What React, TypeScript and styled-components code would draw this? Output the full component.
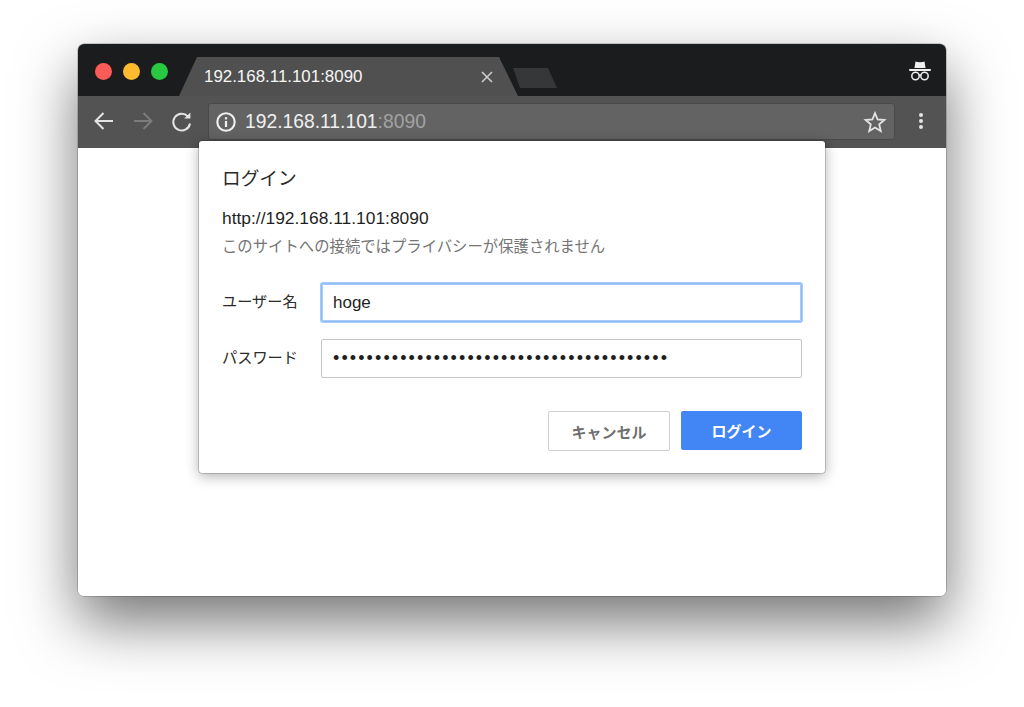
import React from "react";
import styled, { createGlobalStyle } from "styled-components";

const Global = createGlobalStyle`
  html, body { margin: 0; padding: 0; background: #fff; }
  body { font-family: "Liberation Sans", "Noto Sans CJK JP", sans-serif; overflow: hidden; }
`;

const Page = styled.div`
  width: 1024px;
  height: 707px;
  padding: 44px 78px 0;
  box-sizing: border-box;
  background: #fff;
`;

const Browser = styled.div`
  position: relative;
  width: 868px;
  height: 552px;
  border-radius: 6px;
  background: #fff;
  box-shadow: 0 26px 60px rgba(0, 0, 0, 0.55), 0 0 0 0.5px rgba(0, 0, 0, 0.35);
  display: flex;
  flex-direction: column;
`;

const TitleBar = styled.div`
  height: 52px;
  flex: none;
  display: flex;
  align-items: flex-start;
  padding: 0 14px 0 17px;
  background: #1b1c1e;
  border-radius: 6px 6px 0 0;
`;

const Lights = styled.div`
  display: flex;
  gap: 11px;
  margin-top: 19px;
`;

const Light = styled.span<{ $color: string }>`
  width: 17px;
  height: 17px;
  border-radius: 50%;
  background: ${(p) => p.$color};
`;

const Tab = styled.div`
  width: 339px;
  height: 39px;
  margin: 13px 0 0 11px;
  padding: 0 23px 0 25px;
  box-sizing: border-box;
  display: flex;
  align-items: center;
  justify-content: space-between;
  background: #505050;
  clip-path: polygon(18px 0, 320px 0, 339px 100%, 0 100%);
`;

const TabTitle = styled.span`
  color: #f6f6f6;
  font-size: 16.9px;
`;

const TabClose = styled.svg`
  width: 12px;
  height: 12px;
  margin-right: 2px;
  stroke: #d0d0d0;
  stroke-width: 1.5;
  fill: none;
`;

const NewTab = styled.div`
  width: 44px;
  height: 20px;
  margin: 24px 0 0 -5px;
  background: #363739;
  clip-path: polygon(0 0, 35px 0, 44px 100%, 7px 100%);
`;

const Incognito = styled.svg`
  width: 24px;
  height: 24px;
  margin: 15px 0 0 auto;
`;

const Toolbar = styled.div`
  height: 52px;
  flex: none;
  display: flex;
  align-items: center;
  padding: 0 12px 2px 14px;
  box-sizing: border-box;
  background: #535353;
`;

const NavIcon = styled.svg<{ $dim?: boolean }>`
  width: 24px;
  height: 24px;
  margin-right: 15px;
  flex: none;
  fill: none;
  stroke: ${(p) => (p.$dim ? "#7b7b7b" : "#e4e4e4")};
  stroke-width: 2;
`;

const Omnibox = styled.div`
  width: 687px;
  height: 37px;
  margin-left: -1px;
  margin-top: 1px;
  padding: 0 7px 0 6px;
  box-sizing: border-box;
  display: flex;
  align-items: center;
  border: 1px solid #494949;
  border-radius: 3px;
  background: #636363;
`;

const InfoIcon = styled.svg`
  width: 22px;
  height: 22px;
  flex: none;
  margin-right: 8px;
`;

const Url = styled.span`
  font-size: 19.3px;
  color: #f0f0f0;
`;

const Port = styled.span`
  color: #a2a2a2;
`;

const StarIcon = styled.svg`
  width: 24px;
  height: 24px;
  margin-left: auto;
  fill: none;
  stroke: #e4e4e4;
  stroke-width: 1.8;
`;

const MenuIcon = styled.svg`
  width: 6px;
  height: 18px;
  margin: 0 0 0 23px;
  fill: #e4e4e4;
`;

const Content = styled.div`
  flex: 1;
  background: #fff;
  border-radius: 0 0 6px 6px;
`;

const Dialog = styled.div`
  position: absolute;
  left: 121px;
  top: 97px;
  width: 626px;
  height: 332px;
  padding: 24px 23px 0;
  box-sizing: border-box;
  background: #fff;
  border-radius: 3px;
  box-shadow: 0 0 0 0.5px rgba(0, 0, 0, 0.35), 0 3px 14px rgba(0, 0, 0, 0.32);
  display: flex;
  flex-direction: column;
`;

const Title = styled.div`
  font-size: 18.7px;
  line-height: 28px;
  color: #2a2a2a;
`;

const Origin = styled.div`
  margin-top: 13px;
  font-size: 17.4px;
  line-height: 24px;
  color: #1f1f1f;
`;

const Notice = styled.div`
  margin-top: 5px;
  font-size: 15.36px;
  line-height: 24px;
  color: #757575;
`;

const Fields = styled.div`
  margin-top: 24px;
  display: grid;
  grid-template-columns: 99px 481px;
  row-gap: 17px;
  align-items: center;
`;

const Label = styled.label`
  font-size: 15.2px;
  color: #2a2a2a;
  margin-bottom: 5px;
`;

const TextInput = styled.input<{ $focused?: boolean }>`
  width: 481px;
  height: 39px;
  padding: 0 11px;
  box-sizing: border-box;
  outline: none;
  border-radius: 2px;
  border: 1px solid ${(p) => (p.$focused ? "#8fbbf7" : "#c6c6c6")};
  box-shadow: ${(p) => (p.$focused ? "0 0 0 1px #a7cbfa, inset 0 0 0 1px #a7cbfa" : "none")};
  font-family: "Liberation Sans", sans-serif;
  font-size: 17px;
  color: #1f1f1f;
  background: #fff;
`;

const PasswordInput = styled(TextInput)`
  font-size: 18px;
  letter-spacing: 2.1px;
`;

const Actions = styled.div`
  margin-top: 33px;
  display: flex;
  justify-content: flex-end;
  gap: 11px;
`;

const Button = styled.button<{ $primary?: boolean }>`
  width: ${(p) => (p.$primary ? "121px" : "122px")};
  height: ${(p) => (p.$primary ? "39px" : "40px")};
  padding: 0;
  border-radius: 2px;
  border: 1px solid ${(p) => (p.$primary ? "#4285f4" : "#cfcfcf")};
  background: ${(p) => (p.$primary ? "#4285f4" : "#fff")};
  color: ${(p) => (p.$primary ? "#fff" : "#6f6f6f")};
  font-family: "Liberation Sans", "Noto Sans CJK JP", sans-serif;
  font-size: 15px;
  font-weight: 700;
`;

export default function App() {
  return (
    <Page>
      <Global />
      <Browser>
        <TitleBar>
          <Lights>
            <Light $color="#fc5b57" />
            <Light $color="#febb2e" />
            <Light $color="#28c940" />
          </Lights>
          <Tab>
            <TabTitle>192.168.11.101:8090</TabTitle>
            <TabClose viewBox="0 0 12 12">
              <path d="M1 1 L11 11 M11 1 L1 11" />
            </TabClose>
          </Tab>
          <NewTab />
          <Incognito viewBox="0 0 24 24">
            <path d="M7.5 2.2 L8 2.8 C10 3.4 14 3.4 16 2.8 L16.5 2.2 L17.5 9 L6.5 9 Z" fill="#f0f0f0" />
            <rect x="1" y="10" width="22" height="2" rx="1" fill="#f0f0f0" />
            <circle cx="7.5" cy="17" r="3.7" fill="none" stroke="#f0f0f0" strokeWidth="1.5" />
            <circle cx="16.5" cy="17" r="3.7" fill="none" stroke="#f0f0f0" strokeWidth="1.5" />
            <path d="M11 16.4 C11.6 15.9 12.4 15.9 13 16.4" fill="none" stroke="#f0f0f0" strokeWidth="1.3" />
          </Incognito>
        </TitleBar>
        <Toolbar>
          <NavIcon viewBox="0 0 24 24">
            <path d="M21 12 H4 M11.5 4 L3.5 12 L11.5 20" />
          </NavIcon>
          <NavIcon viewBox="0 0 24 24" $dim>
            <path d="M3 12 H20 M12.5 4 L20.5 12 L12.5 20" />
          </NavIcon>
          <NavIcon viewBox="0 0 24 24">
            <path d="M17.9 7.4 A8.4 8.4 0 1 0 20 14.5" />
            <path d="M20.4 3.4 V9.6 H14.2 Z" fill="#e4e4e4" stroke="none" />
          </NavIcon>
          <Omnibox>
            <InfoIcon viewBox="0 0 22 22">
              <circle cx="11" cy="11" r="8.7" fill="none" stroke="#f0f0f0" strokeWidth="2.1" />
              <rect x="9.9" y="10" width="2.2" height="6" fill="#f0f0f0" />
              <rect x="9.9" y="6.2" width="2.2" height="2.2" fill="#f0f0f0" />
            </InfoIcon>
            <Url>
              192.168.11.101<Port>:8090</Port>
            </Url>
            <StarIcon viewBox="0 0 24 24">
              <path d="M12 3.2 L14.6 9.5 L21.4 10 L16.2 14.4 L17.8 21 L12 17.5 L6.2 21 L7.8 14.4 L2.6 10 L9.4 9.5 Z" />
            </StarIcon>
          </Omnibox>
          <MenuIcon viewBox="0 0 6 18">
            <circle cx="3" cy="3" r="2" />
            <circle cx="3" cy="9" r="2" />
            <circle cx="3" cy="15" r="2" />
          </MenuIcon>
        </Toolbar>
        <Content />
        <Dialog>
          <Title>ログイン</Title>
          <Origin>http://192.168.11.101:8090</Origin>
          <Notice>このサイトへの接続ではプライバシーが保護されません</Notice>
          <Fields>
            <Label>ユーザー名</Label>
            <TextInput $focused value="hoge" readOnly />
            <Label>パスワード</Label>
            <PasswordInput type="password" value={"x".repeat(40)} readOnly />
          </Fields>
          <Actions>
            <Button>キャンセル</Button>
            <Button $primary>ログイン</Button>
          </Actions>
        </Dialog>
      </Browser>
    </Page>
  );
}
